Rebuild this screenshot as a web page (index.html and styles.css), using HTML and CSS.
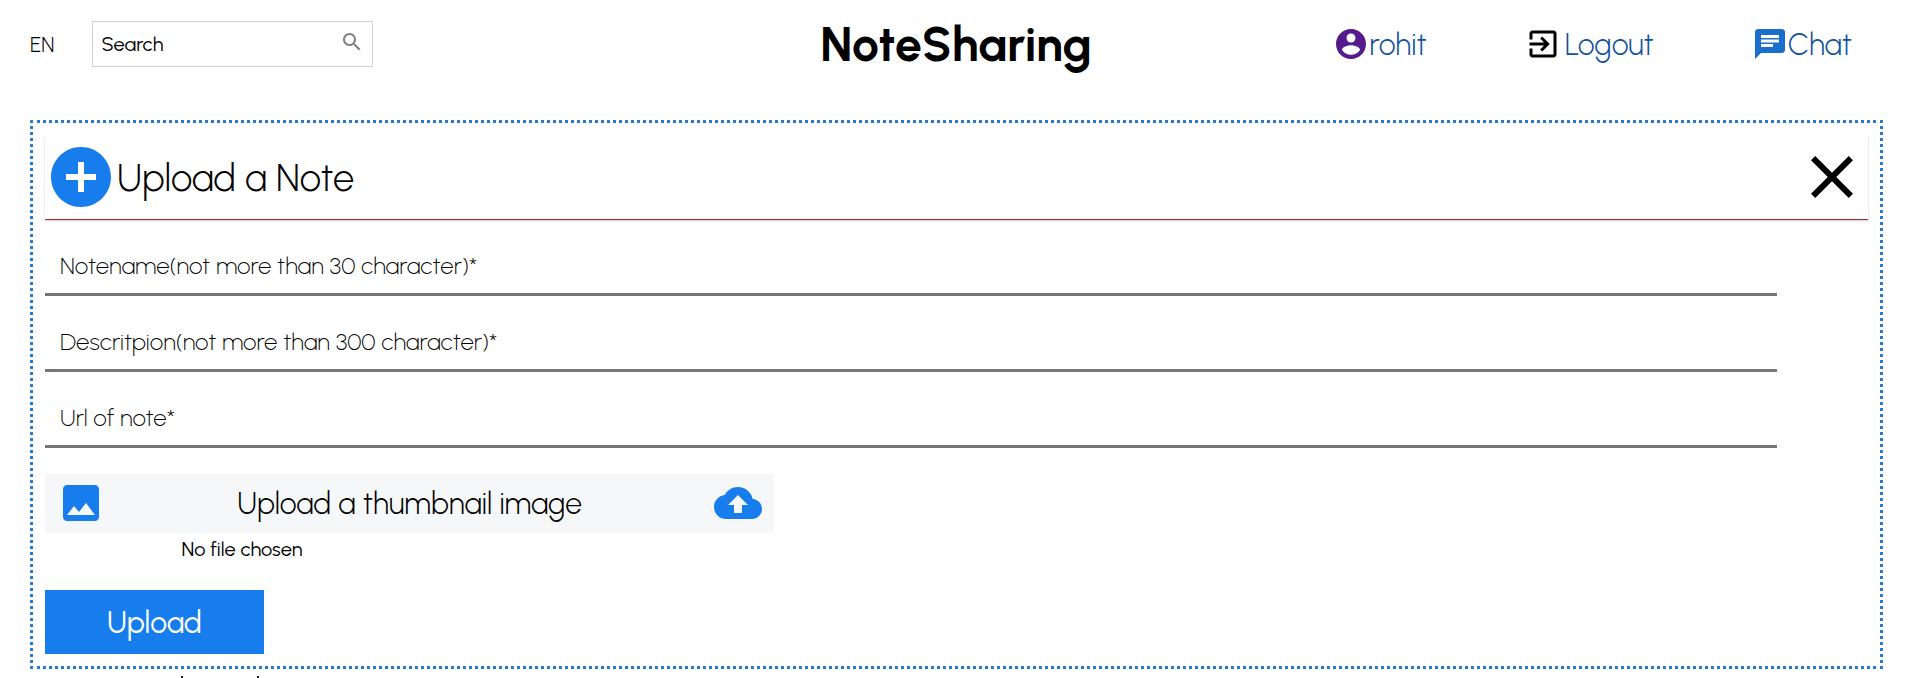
FILE: index.html
```html
<!DOCTYPE html>
<html lang="en">
<head>
<meta charset="utf-8">
<title>NoteSharing</title>
<link rel="stylesheet" href="styles.css">
</head>
<body>
<header class="navbar">
  <div class="nav-left">
    <span class="language">EN</span>
    <label class="search">
      <input class="search-input" type="text" placeholder="Search" aria-label="Search">
      <svg class="search-icon" viewBox="0 0 24 24"><path d="M15.5 14h-.79l-.28-.27C15.41 12.59 16 11.11 16 9.5 16 5.91 13.09 3 9.5 3S3 5.91 3 9.5 5.91 16 9.5 16c1.61 0 3.09-.59 4.23-1.57l.27.28v.79l5 4.99L20.49 19l-4.99-5zm-6 0C7.01 14 5 11.99 5 9.5S7.01 5 9.5 5 14 7.01 14 9.5 11.99 14 9.5 14z"/></svg>
    </label>
  </div>
  <h1 class="logo">NoteSharing</h1>
  <nav class="nav-right">
    <a class="nav-link" href="#profile"><svg class="icon profile-icon" viewBox="0 0 24 24"><path d="M12 2C6.48 2 2 6.48 2 12s4.48 10 10 10 10-4.48 10-10S17.52 2 12 2zm0 3c1.66 0 3 1.34 3 3s-1.34 3-3 3-3-1.34-3-3 1.34-3 3-3zm0 14.2c-2.5 0-4.71-1.28-6-3.22.03-1.99 4-3.08 6-3.08 1.99 0 5.97 1.09 6 3.08-1.29 1.94-3.5 3.22-6 3.22z"/></svg>rohit</a>
    <a class="nav-link logout" href="#logout"><svg class="icon logout-icon" viewBox="0 0 24 24"><path d="M10.09 15.59L11.5 17l5-5-5-5-1.41 1.41L12.67 11H3v2h9.67l-2.58 2.59zM19 3H5c-1.11 0-2 .9-2 2v4h2V5h14v14H5v-4H3v4c0 1.1.89 2 2 2h14c1.1 0 2-.9 2-2V5c0-1.1-.9-2-2-2z"/></svg>Logout</a>
    <a class="nav-link" href="#chat"><svg class="icon chat-icon" viewBox="0 0 24 24"><path d="M20 2H4c-1.1 0-1.99.9-1.99 2L2 22l4-4h14c1.1 0 2-.9 2-2V4c0-1.1-.9-2-2-2zM6 9h12v2H6V9zm8 5H6v-2h8v2zm4-6H6V6h12v2z"/></svg>Chat</a>
  </nav>
</header>
<main class="page">
  <form class="upload-form">
    <div class="form-header">
      <svg class="icon-large add-icon" viewBox="0 0 24 24"><path d="M12 2C6.48 2 2 6.48 2 12s4.48 10 10 10 10-4.48 10-10S17.52 2 12 2zm5 11h-4v4h-2v-4H7v-2h4V7h2v4h4v2z"/></svg>
      <h2 class="form-title">Upload a Note</h2>
      <button class="close" type="button" aria-label="Close"><svg class="icon-large" viewBox="0 0 24 24"><path d="M19 6.41L17.59 5 12 10.59 6.41 5 5 6.41 10.59 12 5 17.59 6.41 19 12 13.41 17.59 19 19 17.59 13.41 12z"/></svg></button>
    </div>
    <input class="field" type="text" placeholder="Notename(not more than 30 character)*" aria-label="Note name">
    <input class="field" type="text" placeholder="Descritpion(not more than 300 character)*" aria-label="Description">
    <input class="field" type="text" placeholder="Url of note*" aria-label="Url of note">
    <div class="thumbnail">
      <label class="thumbnail-label" for="thumbnail">
        <svg class="icon-medium" viewBox="0 0 24 24"><path d="M21 19V5c0-1.1-.9-2-2-2H5c-1.1 0-2 .9-2 2v14c0 1.1.9 2 2 2h14c1.1 0 2-.9 2-2zM8.5 13.5l2.5 3.01L14.5 12l4.5 6H5l3.5-4.5z"/></svg>
        <span>Upload a thumbnail image</span>
        <svg class="icon-medium" viewBox="0 0 24 24"><path d="M19.35 10.04C18.67 6.59 15.64 4 12 4 9.11 4 6.6 5.64 5.35 8.04 2.34 8.36 0 10.91 0 14c0 3.31 2.69 6 6 6h13c2.76 0 5-2.24 5-5 0-2.64-2.05-4.78-4.65-4.96zM14 13v4h-4v-4H7l5-5 5 5h-3z"/></svg>
      </label>
      <input class="file-input" id="thumbnail" type="file">
    </div>
    <button class="submit" type="submit">Upload</button>
  </form>
  <div class="marks"><i class="mark"></i><i class="mark"></i></div>
</main>
</body>
</html>
```
FILE: styles.css
```css
* {
  box-sizing: border-box;
}

body {
  margin: 0;
  background: #fff;
  color: #000;
  font-family: Urbanist, Lato, sans-serif;
  font-size: 20px;
  overflow-x: hidden;
}

svg {
  display: block;
  flex: none;
  fill: currentColor;
}

input,
button {
  color: inherit;
  font-family: inherit;
}

.navbar {
  display: grid;
  grid-template-columns: 1fr 1fr 1fr;
  align-items: center;
  height: 88px;
  padding: 0 28px 0 30px;
}

.nav-left {
  display: flex;
  align-items: center;
  gap: 38px;
}

.language {
  font-size: 21px;
  font-weight: 300;
}

.search {
  display: flex;
  width: 281px;
  height: 46px;
  padding: 0 8px;
  border: 1px solid lightgray;
}

.search-input {
  flex: 1;
  min-width: 0;
  padding: 0;
  border: 0;
  outline: 0;
  font-size: 20px;
}

.search-input::placeholder,
.field::placeholder {
  color: #000;
  opacity: 1;
}

.search-icon {
  width: 24px;
  height: 24px;
  margin-top: 8px;
  color: gray;
}

.logo {
  margin: 0;
  font-size: 48px;
  text-align: center;
}

.nav-right {
  display: flex;
  justify-content: flex-end;
  gap: 98px;
  padding-right: 30px;
}

.nav-link {
  display: flex;
  align-items: center;
  color: #11529b;
  font-size: 30px;
  font-weight: 300;
  text-decoration: none;
}

.logout {
  gap: 4px;
}

.icon {
  width: 36px;
  height: 36px;
}

.profile-icon {
  color: #551a8b;
}

.logout-icon {
  color: #000;
}

.chat-icon {
  color: #196fc9;
}

.page {
  padding: 32px 27px 0 30px;
}

.upload-form {
  padding: 12px;
  border: 3px dotted #2979d2;
}

.form-header {
  display: flex;
  align-items: center;
  padding: 6px 0;
  border-bottom: 1px solid brown;
  box-shadow: 0 1px 2px rgba(0, 0, 0, 0.2);
}

.icon-large {
  width: 72px;
  height: 72px;
}

.add-icon,
.icon-medium {
  color: #177ded;
}

.form-title {
  flex: 1;
  margin: 0;
  padding-top: 2px;
  font-size: 38px;
  font-weight: 300;
}

.close {
  padding: 0;
  border: 0;
  background: none;
}

.field {
  display: block;
  width: 95%;
  height: 61px;
  margin-top: 15px;
  padding: 2px 15px 0;
  border: 0;
  border-bottom: 3px solid #767676;
  outline: 0;
  font-size: 24px;
  font-weight: 200;
}

.thumbnail {
  display: flex;
  flex-direction: column;
  align-items: center;
  width: 40%;
  margin: 26px 0;
}

.thumbnail-label {
  display: flex;
  align-items: center;
  justify-content: space-between;
  width: 100%;
  height: 59px;
  padding: 0 12px 1px;
  background: #f5f7f9;
  font-size: 30px;
  font-weight: 300;
}

.icon-medium {
  width: 48px;
  height: 48px;
}

.file-input {
  width: 456px;
  height: 27px;
  font-size: 20px;
  margin-top: 4px;
}

.file-input::file-selector-button {
  width: 0;
  margin: 0;
  padding: 0;
  border: 0;
  visibility: hidden;
}

.submit {
  display: block;
  width: 12%;
  height: 64px;
  border: 0;
  background: #177ded;
  color: #fff;
  font-size: 30px;
}

.marks {
  display: flex;
  gap: 74px;
  padding: 7px 0 0 151px;
}

.mark {
  width: 2px;
  height: 2px;
  background: #222;
}
```
